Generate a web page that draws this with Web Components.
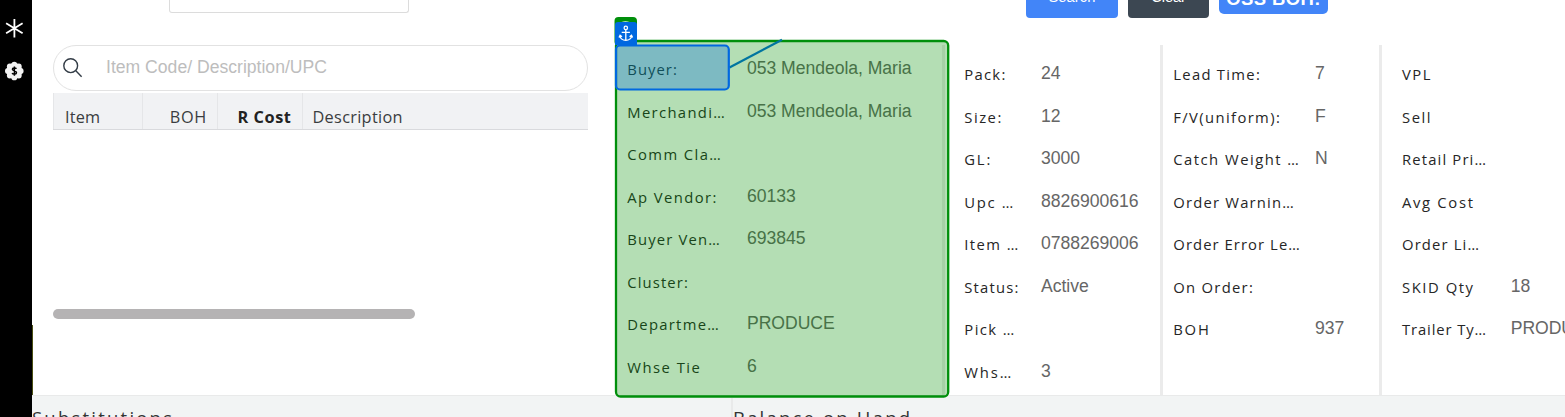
<!DOCTYPE html>
<html lang="en">
<head>
<meta charset="utf-8">
<title>Item details</title>
<style>
html,body{margin:0;height:100%;overflow:hidden;background:#fff}
body{font-family:"Open Sans","Noto Sans",sans-serif}
</style>
</head>
<body>
<item-page></item-page>
<script>
const define=(name,html,init)=>customElements.define(name,class extends HTMLElement{
  connectedCallback(){
    if(this.shadowRoot)return;
    const t=document.createElement('template');
    t.innerHTML=typeof html==='function'?html(this):html;
    this.attachShadow({mode:'open'}).append(t.content.cloneNode(true));
    if(init)init(this);
  }
});

/* A single line of text whose tracking is adjusted to an exact line width. */
define('fit-text',`<style>:host{display:block;white-space:nowrap}span{display:inline-block;white-space:pre}</style><span><slot></slot></span>`,el=>{
  const w=+el.getAttribute('w'),n=el.textContent.length,s=el.shadowRoot.querySelector('span');
  if(w&&n>1)s.style.letterSpacing=((w-s.getBoundingClientRect().width)/(n-1)).toFixed(3)+'px';
});

define('side-bar',`<style>
:host{display:flex;flex-direction:column;align-items:center;gap:23px;width:28px;padding:18px 4px 0 0;height:399px;background:#000;flex:none}
svg{display:block;flex:none}
</style>
<svg width="20" height="20" viewBox="0 0 20 20" stroke="#fff" stroke-width="1.8"><path d="M10.4 1V19.4M2.1 5.2L18.6 15.2M18.6 5.2L2.1 15.2"/></svg>
<svg width="20" height="20" viewBox="0 0 20 20"><g fill="#f2f2f2"><circle cx="10.3" cy="10" r="7.9"/><circle cx="10.3" cy="3.6" r="2.9"/><circle cx="14.8" cy="5.5" r="2.9"/><circle cx="16.7" cy="10" r="2.9"/><circle cx="14.8" cy="14.5" r="2.9"/><circle cx="10.3" cy="16.4" r="2.9"/><circle cx="5.8" cy="14.5" r="2.9"/><circle cx="3.9" cy="10" r="2.9"/><circle cx="5.8" cy="5.5" r="2.9"/></g><path d="M12.4 7.8C11.8 6.5 8.4 6.5 8.4 8.3C8.4 10.2 12.5 9.5 12.5 11.7C12.5 13.6 8.8 13.5 8.1 12.1M10.4 5.4V14.7" fill="none" stroke="#000" stroke-width="1.5"/></svg>`);

define('action-button',`<style>
:host{display:flex;box-sizing:border-box;justify-content:center;align-items:flex-end;border-radius:4px;color:#fff;background:var(--bg,#4285f8);height:45px;font:14.7px/20px "Liberation Sans",Arial,sans-serif}
</style><slot></slot>`);

define('top-bar',`<style>
:host{display:flex;align-items:flex-start;height:45px;overflow:hidden}
.input{box-sizing:border-box;width:240px;height:13px;margin-left:137px;border:1px solid #dcdcdc;border-top:0;border-radius:0 0 3px 3px}
.buttons{display:flex;gap:10px;margin-left:617px}
action-button{margin-top:-27px;padding-bottom:11px}
.a{width:92px}.b{width:81px;--bg:#3c4752}
.c{width:109px;margin-top:-31px;padding-bottom:5px;border-radius:5px;font-size:18.5px;font-weight:bold}
</style>
<div class="input"></div>
<div class="buttons"><action-button class="a"><fit-text w="47">Search</fit-text></action-button><action-button class="b"><fit-text w="34.5">Clear</fit-text></action-button><action-button class="c"><fit-text w="94">OSS BOH:</fit-text></action-button></div>`);

define('search-field',`<style>
:host{display:flex;align-items:center;box-sizing:border-box;width:535px;height:46px;border:1px solid #e2e2e2;border-radius:23px;padding:0 0 2px 8px;font:17.6px/20px "Liberation Sans",Arial,sans-serif;color:#bdbdbd}
svg{margin:2px 23px 0 0;flex:none}
</style><svg width="21" height="22" viewBox="0 0 21 22" fill="none" stroke="#333c46" stroke-width="1.4"><circle cx="8.7" cy="8.7" r="6.9"/><path d="M13.6 13.6L19.6 19.7"/></svg><fit-text w="219.5"><slot></slot></fit-text>`,el=>{
  const f=el.shadowRoot.querySelector('fit-text');f.textContent=el.textContent;
});

define('table-head',`<style>
:host{display:grid;grid-template-columns:89px 75px 85px 1fr;box-sizing:border-box;width:535px;height:37px;margin-top:2px;background:#f1f2f4;border-bottom:1px solid #d9dadd;font-size:16.3px;line-height:24px;color:#3a3d40}
div{box-sizing:border-box;padding:12px 11px 0;border-left:1px solid #e5e6e8;display:flex}
div:first-child{border:0;padding-left:10px}.r{justify-content:flex-end}.b{font-weight:700;color:#222}
</style><div><fit-text w="35">Item</fit-text></div><div class="r" style="padding-right:10px"><fit-text w="36.5">BOH</fit-text></div><div class="r b" style="padding-right:10.500px"><fit-text w="53.5">R Cost</fit-text></div><div style="padding-left:9.500px"><fit-text w="90">Description</fit-text></div>`);

define('item-list',`<style>
:host{display:block;box-sizing:border-box;width:583px;flex:none;padding-left:21px}
.scroll{width:362px;height:10px;margin-top:179px;border-radius:5px;background:#b5b3b4}
.mark{width:1px;height:70px;margin:6px 0 0 -21px;background:#4a4f12}
</style><search-field>Item Code/ Description/UPC</search-field><table-head></table-head><div class="scroll"></div><div class="mark"></div>`);

define('field-row',el=>`<style>
:host{display:grid;grid-template-columns:var(--lw) 1fr;height:42.5px;line-height:22px;white-space:nowrap}
.l{font-size:14.8px;color:#262626;padding-left:.3px}
.v{font:17.6px/20px "Liberation Sans",Arial,sans-serif;color:#666;letter-spacing:-.04px}
</style><fit-text class="l" w="${el.getAttribute('w')}">${el.getAttribute('label')}</fit-text><span class="v"><slot></slot></span>`);

define('field-column',`<style>
:host{display:block;box-sizing:border-box;height:350px;padding:var(--pad);border-right:3px solid #ebebeb;overflow:hidden}
:host([last]){border:0}
</style><slot></slot>`);

define('anchor-overlay',`<style>
:host{display:block;position:absolute;left:614px;top:16px;width:338px;height:384px}
svg{display:block}
</style><svg width="338" height="384" viewBox="614 16 338 384">
<path d="M614.5 44V21q0-4 4-4h14.500q4 0 4 4v21h-22z" fill="#008f0b"/>
<rect x="616" y="41" width="332.200" height="355.500" rx="4.500" fill="#009000" fill-opacity=".295" stroke="#008f0b" stroke-width="2.300"/>
<path d="M729.500 67.500L782 39.800" stroke="#0075a0" stroke-width="2.200"/>
<rect x="616" y="45.500" width="112.800" height="44" rx="4" fill="#0068e5" fill-opacity=".3" stroke="#0068e0" stroke-width="2.200"/>
<path d="M615 45V25q0-3 3-3h16q3 0 3 3v20z" fill="#0068e0"/>
<path d="M621.500 22q4-1.400 8 0z" fill="#e8fbe8"/>
<g fill="none" stroke="#fff" stroke-width="1.300"><circle cx="625.800" cy="27.900" r="1.700"/><path d="M625.800 29.600V40M621.700 32.400h8.200M620 35.500C620 38.700 622.800 40.300 625.800 40.300S631.600 38.700 631.600 35.500M619 37.500L620.100 35.300L622 36.800M632.600 37.500L631.500 35.300L629.600 36.800"/></g>
</svg>`);

define('bottom-bar',`<style>
:host{display:grid;grid-template-columns:699px 1fr;box-sizing:border-box;height:22px;overflow:hidden;background:#f2f4f4;border-top:1px solid #e9eaea;font-size:18.500px;line-height:26px;color:#333}
div{padding-top:9px;height:30px}.r{border-left:2px solid #e9eaea;margin-top:2px;padding-top:7px}
</style><div><fit-text w="140">Substitutions</fit-text></div><div class="r"><fit-text w="177">Balance on Hand</fit-text></div>`);

const column=(style,last,rows)=>`<field-column style="${style}" ${last?'last':''}>${rows.map(([l,w,v=''])=>`<field-row label="${l}" w="${w}">${v}</field-row>`).join('')}</field-column>`;
define('item-page',`<style>
:host{display:flex;position:relative;width:1565px;height:417px;overflow:hidden}
main{flex:1;min-width:0}
.body{display:grid;grid-template-columns:583px 330px 218px 219px 183px;height:350px}
</style><side-bar></side-bar><main><top-bar></top-bar><div class="body"><item-list></item-list>
${column('--pad:13px 0 0 12px;--lw:120px',0,[['Buyer:',49.5,'053 Mendeola, Maria'],['Merchandi…',97.5,'053 Mendeola, Maria'],['Comm Cla…',93.5],['Ap Vendor:',89,'60133'],['Buyer Ven…',92.5,'693845'],['Cluster:',60.5],['Departme…',91.5,'PRODUCE'],['Whse Tie',72.5,'6']])}
${column('--pad:18px 0 0 19px;--lw:77px',0,[['Pack:',41,'24'],['Size:',37,'12'],['GL:',26,'3000'],['Upc …',49,'8826900616'],['Item …',54,'0788269006'],['Status:',54,'Active'],['Pick …',50],['Whs…',47,'3']])}
${column('--pad:18px 0 0 10px;--lw:142px',0,[['Lead Time:',86.5,'7'],['F/V(uniform):',106.5,'F'],['Catch Weight …',125.5,'N'],['Order Warnin…',120.5],['Order Error Le…',126.5],['On Order:',79.5],['BOH',35.5,'937']])}
${column('--pad:18px 0 0 19.700px;--lw:109px',1,[['VPL',28.5],['Sell',28.5],['Retail Pri…',84],['Avg Cost',71],['Order Li…',77],['SKID Qty',71,'18'],['Trailer Ty…',84,'PRODUCE']])}
</div><bottom-bar></bottom-bar></main><anchor-overlay></anchor-overlay>`);
</script>
</body>
</html>
